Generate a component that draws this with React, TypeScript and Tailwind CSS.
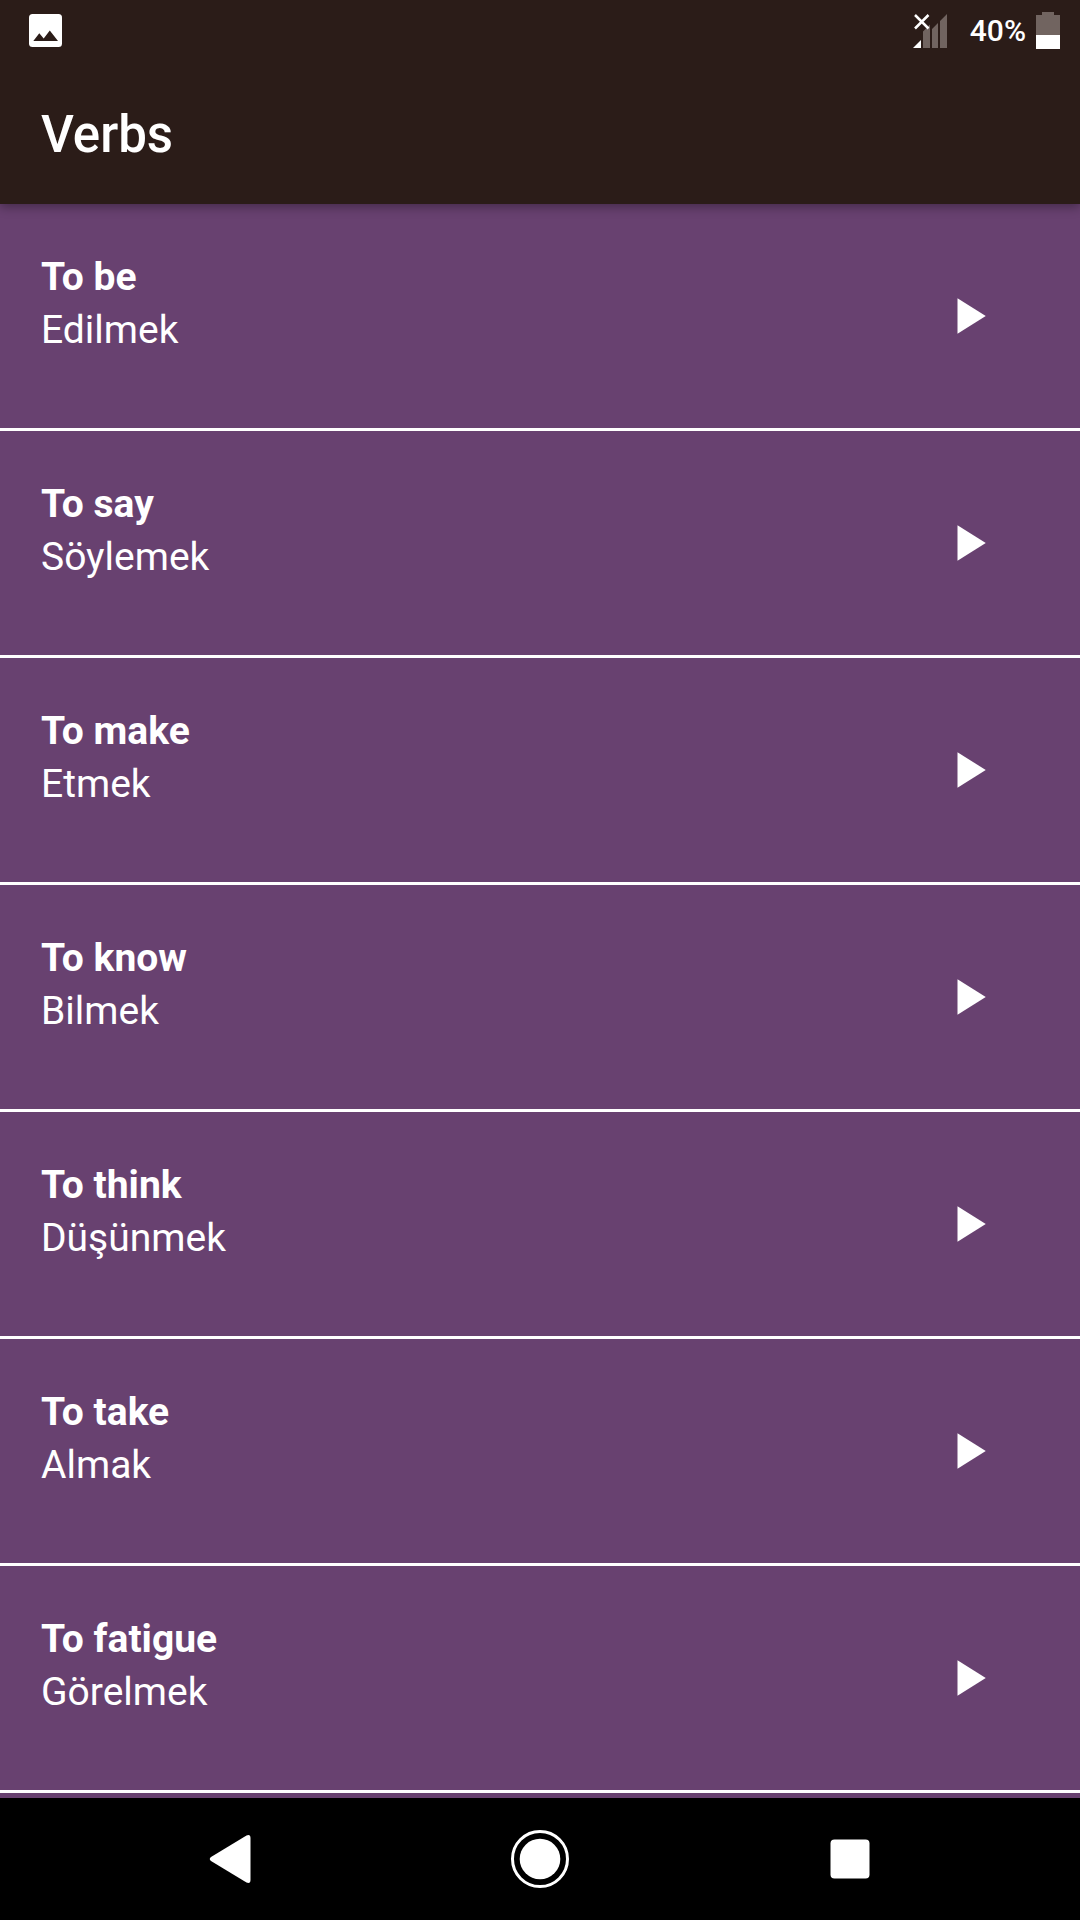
const verbs = [
  { english: 'To be', turkish: 'Edilmek' },
  { english: 'To say', turkish: 'Söylemek' },
  { english: 'To make', turkish: 'Etmek' },
  { english: 'To know', turkish: 'Bilmek' },
  { english: 'To think', turkish: 'Düşünmek' },
  { english: 'To take', turkish: 'Almak' },
  { english: 'To fatigue', turkish: 'Görelmek' },
];

function StatusBar() {
  return (
    <div className="flex h-[61px] items-center justify-between pl-[29px] pr-5">
      <svg className="h-[33px] w-[33px]" viewBox="0 0 33 33" aria-hidden="true">
        <rect width="33" height="33" rx="3.5" fill="#fff" />
        <path d="M4.3 27 10.3 19.3 14.7 24.4 20.8 16.6 29 27z" fill="#2b1c18" />
      </svg>

      <div className="flex items-center">
        <svg className="mr-[23px] h-[34px] w-[34px]" viewBox="0 0 34 34" aria-hidden="true">
          <path d="M10 17.5 17 10.5V34H10zM19 15 25 9V34H19zM27 7 34 0V34H27z" fill="#716460" />
          <path d="M0 34 8 26V34z" fill="#fff" />
          <path d="M2 1 15.5 14.5M15.5 1 2 14.5" stroke="#fff" strokeWidth="2.5" />
        </svg>
        <span className="mr-[10px] text-[30px] font-medium leading-none">40%</span>
        <svg className="h-[37px] w-6" viewBox="0 0 24 37" aria-hidden="true">
          <path d="M6 0H18V3H24V23H0V3H6z" fill="#716460" />
          <path d="M0 23H24V37H0z" fill="#fff" />
        </svg>
      </div>
    </div>
  );
}

function VerbRow({ english, turkish }: { english: string; turkish: string }) {
  return (
    <li className="flex h-[227px] items-center justify-between border-b-[3px] border-white pl-[41px] pr-[82px]">
      <div className="self-start pt-[47px] text-[39px] leading-[53px]">
        <p className="font-bold">{english}</p>
        <p>{turkish}</p>
      </div>
      <button type="button" aria-label={`Play ${english}`}>
        <svg className="h-[60px] w-[60px]" viewBox="0 0 24 24" fill="currentColor">
          <path d="M7.8 4.9v14.2l11.3-7.1z" />
        </svg>
      </button>
    </li>
  );
}

function NavBar() {
  return (
    <nav className="sticky bottom-0 grid h-[122px] grid-cols-3 bg-black px-[75px]">
      <button type="button" aria-label="Back" className="flex items-center justify-center">
        <svg className="h-[60px] w-[60px]" viewBox="0 0 60 60" fill="currentColor">
          <path d="M11 28 46.5 6.5Q50.5 5 50.5 9V51Q50.5 55 46.5 53.5L11 32Q8.5 30 11 28z" />
        </svg>
      </button>
      <button type="button" aria-label="Home" className="flex items-center justify-center">
        <svg className="h-[60px] w-[60px]" viewBox="0 0 60 60">
          <circle cx="30" cy="30" r="27.5" fill="none" stroke="currentColor" strokeWidth="3" />
          <circle cx="30" cy="30" r="20.3" fill="currentColor" />
        </svg>
      </button>
      <button type="button" aria-label="Recent apps" className="flex items-center justify-center">
        <svg className="h-[60px] w-[60px]" viewBox="0 0 60 60" fill="currentColor">
          <rect x="10.5" y="10.5" width="39" height="39" rx="4" />
        </svg>
      </button>
    </nav>
  );
}

export default function App() {
  return (
    <div className="flex min-h-screen flex-col bg-[#684170] font-[Roboto,sans-serif] text-white">
      <header className="relative z-10 bg-[#2b1c18] shadow-[0_3px_10px_rgba(0,0,0,0.35)]">
        <StatusBar />
        <div className="flex h-[143px] items-center pl-[41px] pt-1">
          <h1 className="text-[51px] font-medium leading-[60px]">Verbs</h1>
        </div>
      </header>

      <ul className="flex-1">
        {verbs.map((verb) => (
          <VerbRow key={verb.english} english={verb.english} turkish={verb.turkish} />
        ))}
      </ul>

      <NavBar />
    </div>
  );
}
